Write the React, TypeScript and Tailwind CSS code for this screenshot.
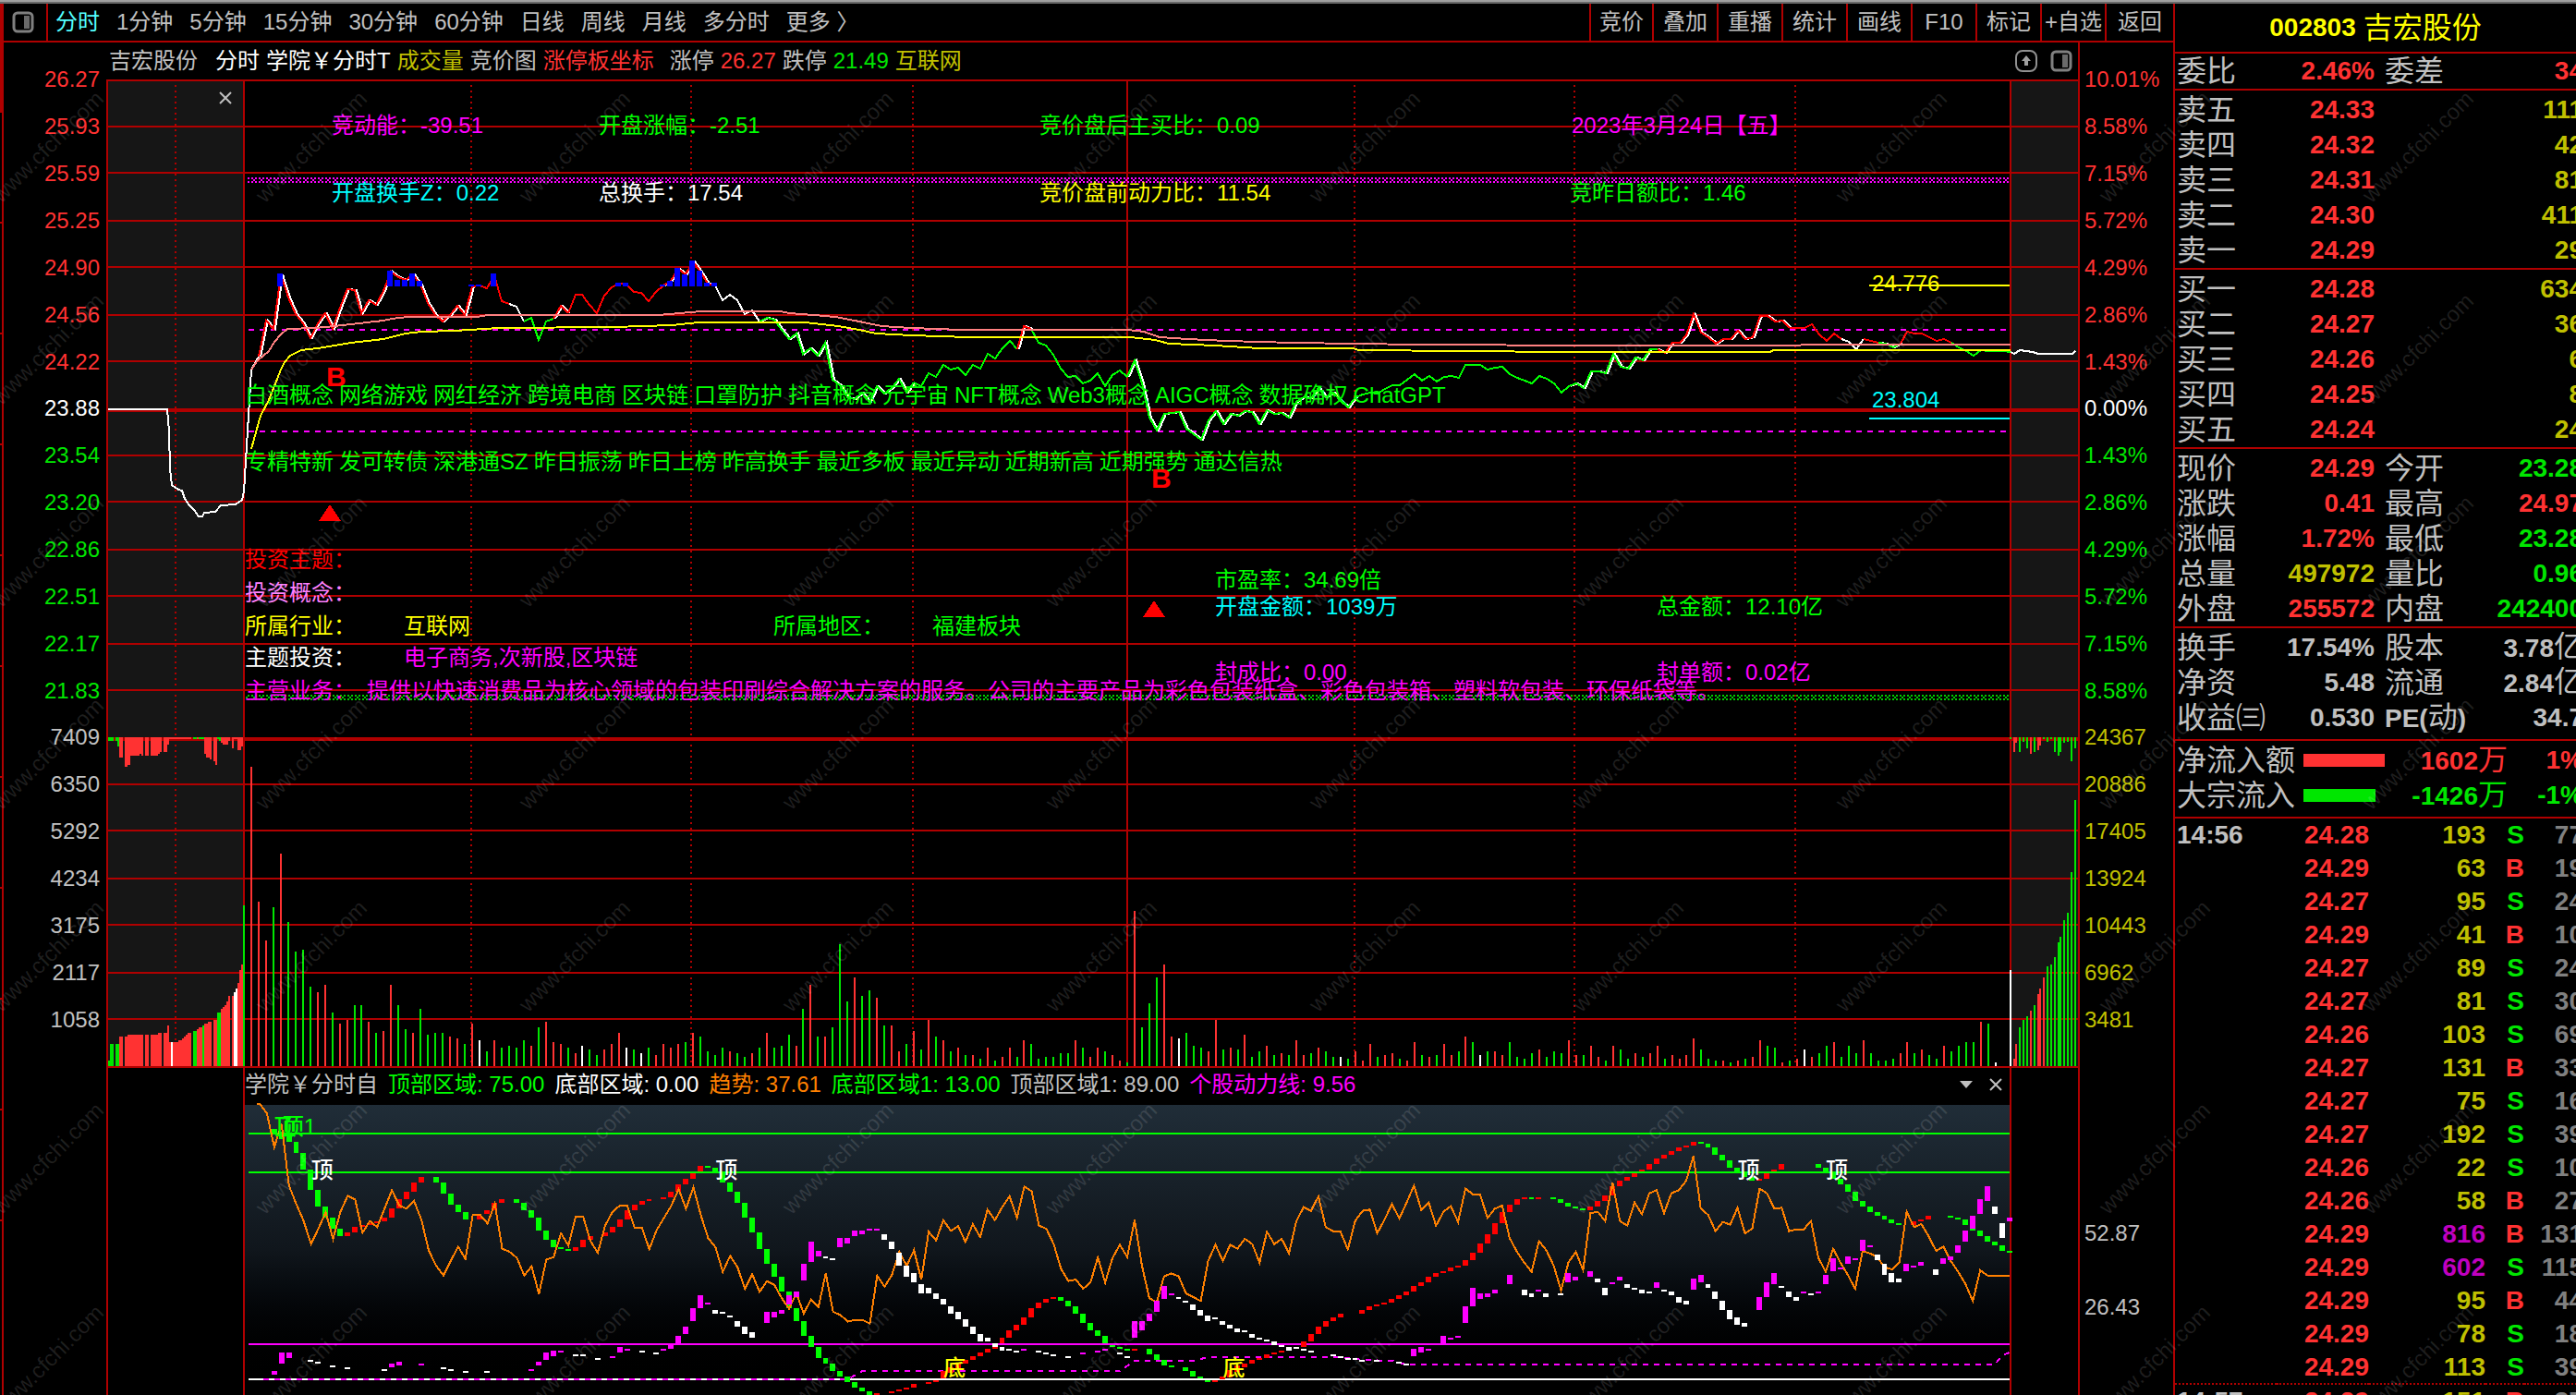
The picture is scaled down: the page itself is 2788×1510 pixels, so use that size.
import React from 'react';

const PERIODS = ['分时', '1分钟', '5分钟', '15分钟', '30分钟', '60分钟', '日线', '周线', '月线', '多分时', '更多 〉'];
const TOOLS = ['竞价', '叠加', '重播', '统计', '画线', 'F10', '标记', '+自选', '返回'];

const PRICE_AXIS = ['26.27', '25.93', '25.59', '25.25', '24.90', '24.56', '24.22', '23.88', '23.54', '23.20', '22.86', '22.51', '22.17', '21.83'];
const VOLUME_AXIS = ['7409', '6350', '5292', '4234', '3175', '2117', '1058'];
const PERCENT_AXIS = ['10.01%', '8.58%', '7.15%', '5.72%', '4.29%', '2.86%', '1.43%', '0.00%', '1.43%', '2.86%', '4.29%', '5.72%', '7.15%', '8.58%'];
const AMOUNT_AXIS = ['24367', '20886', '17405', '13924', '10443', '6962', '3481'];

const SELLS = [['卖五', '24.33', '111'], ['卖四', '24.32', '42'], ['卖三', '24.31', '81'], ['卖二', '24.30', '411'], ['卖一', '24.29', '29']];
const BUYS = [['买一', '24.28', '634'], ['买二', '24.27', '36'], ['买三', '24.26', '6'], ['买四', '24.25', '8'], ['买五', '24.24', '24']];

const RED = 'text-[#ff3232]';
const GREEN = 'text-[#00e600]';
const YELLOW = 'text-[#c0c000]';
const GRAY = 'text-[#c0c0c0]';

const QUOTE = [
  ['现价', '24.29', RED, '今开', '23.28', GREEN],
  ['涨跌', '0.41', RED, '最高', '24.97', RED],
  ['涨幅', '1.72%', RED, '最低', '23.28', GREEN],
  ['总量', '497972', YELLOW, '量比', '0.96', GREEN],
  ['外盘', '255572', RED, '内盘', '242400', GREEN],
];
const CAPITAL = [
  ['换手', '17.54%', GRAY, '股本', '3.78亿', GRAY],
  ['净资', '5.48', GRAY, '流通', '2.84亿', GRAY],
  ['收益㈢', '0.530', GRAY, 'PE(动)', '34.7', GRAY],
];

const TICKS = [
  ['14:56', '24.28', '193', 'S', '77'], ['', '24.29', '63', 'B', '19'], ['', '24.27', '95', 'S', '24'],
  ['', '24.29', '41', 'B', '10'], ['', '24.27', '89', 'S', '24'], ['', '24.27', '81', 'S', '30'],
  ['', '24.26', '103', 'S', '69'], ['', '24.27', '131', 'B', '33'], ['', '24.27', '75', 'S', '16'],
  ['', '24.27', '192', 'S', '39'], ['', '24.26', '22', 'S', '10'], ['', '24.26', '58', 'B', '27'],
  ['', '24.29', '816', 'B', '131'], ['', '24.29', '602', 'S', '115'], ['', '24.29', '95', 'B', '44'],
  ['', '24.29', '78', 'S', '18'], ['', '24.29', '113', 'S', '39'], ['14:57', '24.29', '151', 'B', '37'],
];

// y of the last price, one entry per minute
const PRICE = [
  532, 400, 386, 347, 356, 297, 322, 340, 350, 366, 350, 339, 356, 333, 313, 314, 339, 325, 330, 315, 294, 300, 303, 297, 308, 328, 341, 348, 341, 331,
  341, 310, 309, 312, 298, 326, 329, 332, 348, 344, 368, 348, 345, 331, 339, 319, 319, 330, 339, 320, 311, 307, 308, 316, 317, 326, 316, 309, 304, 291,
  297, 283, 294, 307, 309, 325, 319, 325, 340, 336, 348, 344, 346, 357, 367, 361, 383, 377, 385, 371, 411, 417, 430, 432, 425, 435, 418, 426, 420, 410,
  425, 414, 418, 404, 408, 395, 400, 398, 406, 395, 399, 383, 388, 377, 369, 378, 353, 356, 371, 374, 384, 399, 408, 407, 415, 412, 404, 418, 406, 401,
  408, 390, 415, 452, 466, 448, 447, 446, 464, 470, 476, 455, 445, 459, 448, 450, 445, 446, 459, 444, 448, 447, 452, 435, 430, 431, 420, 430, 425, 434,
  441, 430, 427, 425, 426, 421, 417, 417, 411, 405, 412, 407, 413, 408, 407, 409, 395, 395, 395, 400, 398, 397, 405, 409, 412, 415, 407, 410, 415, 425,
  418, 415, 420, 402, 402, 404, 383, 397, 399, 387, 390, 378, 378, 382, 371, 371, 363, 340, 360, 365, 372, 367, 367, 358, 367, 365, 342, 342, 348, 347,
  355, 355, 355, 351, 362, 369, 361, 367, 370, 378, 367, 369, 371, 372, 376, 372, 359, 361, 361, 365, 369, 367, 371, 376, 380, 385, 379, 380, 380, 380, 381,
];

// [from minute, to minute, colour, drawn with a white shadow line]
const PRICE_RUNS: [number, number, string, boolean][] = [
  [0, 2, '#ffffff', false], [2, 31, '#ff0000', true], [31, 36, '#ff0000', false], [36, 38, '#ffffff', false],
  [38, 42, '#00ff00', false], [42, 44, '#ff0000', true], [44, 57, '#ff0000', false], [57, 64, '#ff0000', true],
  [64, 70, '#ffffff', false], [70, 91, '#00ff00', true], [91, 105, '#00ff00', false], [105, 107, '#ff0000', true],
  [107, 120, '#00ff00', false], [120, 151, '#00ff00', true], [151, 180, '#00ff00', false], [180, 192, '#00ff00', true],
  [192, 210, '#ff0000', true], [210, 217, '#ff0000', false], [217, 220, '#ffffff', false], [220, 222, '#ff0000', false],
  [222, 225, '#00ff00', true], [225, 232, '#ff0000', false], [232, 240, '#00ff00', false],
];

const BLUE_BARS = [
  [5, 296], [20, 293], [21, 303], [22, 303], [23, 296], [24, 304], [31, 308], [32, 308], [34, 296], [51, 306], [52, 306],
  [57, 308], [58, 304], [59, 290], [60, 297], [61, 282], [62, 293], [63, 306], [64, 306],
];

const VOLUME = `g87 r162 r89 r68 g86 r115 g78 g62 g63 g43 r40 r44 g29 r23 r25 g33 g33 r24 g18 r19 r44 g33 g20 r18 g31 g17 g18 g18 r16 r15
g12 r23 w14 g8 r14 g10 g11 g10 g14 r11 g21 r24 r13 r12 g10 r7 w11 g9 g6 r9 r12 r18 w10 g9 w7 g10 r6 r12 r10 r12
g13 r18 g16 g8 g6 g10 r8 g7 g5 r7 g10 r18 g10 g11 g17 r11 g31 r44 g16 r16 g21 g66 g35 r48 g38 g41 r37 g22 r22 r8
g12 r19 g9 r25 g16 r14 g8 r10 g6 r6 g4 r10 g3 r5 r10 g5 r14 g12 g4 g5 g5 g7 g7 r14 g10 r5 r10 g8 r6 r3
g2 r84 g21 g34 g48 r55 r16 w15 g18 g11 g10 r8 r25 g9 r10 g9 r17 g5 g8 r11 g6 r7 g6 r14 r6 g7 r10 g8 g5 w5
g4 r8 r3 r12 g5 r6 r7 g4 r3 r13 g6 r5 g6 r12 r6 g8 r16 g13 w6 g8 r8 r6 g13 g5 g4 g7 r9 g5 g8 g7
r14 r6 g6 r11 r5 g3 r11 g9 g4 r7 g5 r7 r11 g4 r6 r4 r6 r15 g9 g4 g3 r3 g2 r3 g4 r5 r14 g11 g10 r2
g3 r4 w9 r5 g7 g11 r13 g5 g11 g7 r14 g7 g3 g3 g4 r7 r13 g7 r9 g6 g4 r11 g8 g11 g13 g13 r24 g23 w2 w0 w52`.split(/\s+/);

// opening call auction: colour, left, right, height
const AUCTION_MATCHED = `g117,119,6 g119,123,24 g125,129,24 r129,133,32 r135,138,32 r138,155,34 r157,161,34 r163,171,34 r171,175,36 r177,181,36
r181,183,44 r183,185,26 w185,187,26 r187,193,26 r193,197,28 r197,199,30 r199,201,32 r201,203,34 r203,207,36 g209,213,38 r213,215,40 r215,219,42
g219,221,44 r221,225,46 r225,229,48 r231,235,50 g235,239,58 r239,241,62 r241,243,64 r243,245,66 r245,247,70 r247,249,76 r251,253,76 w253,255,80
w255,257,84 r257,259,90 r259,261,104 r261,263,110`.split(/\s+/);
const AUCTION_UNMATCHED = `g117,123,4 g125,127,4 g127,129,10 r129,133,22 r135,138,32 r138,141,30 r141,151,20 r151,153,18 r153,155,20 r157,161,20
r163,171,20 r171,173,18 r173,175,16 r177,181,16 r181,183,8 r183,207,2 g209,213,2 r213,215,2 g215,221,2 r221,223,18 r223,227,22 r227,229,24
r231,233,26 r233,235,30 g235,237,2 g237,239,4 r239,241,6 r241,247,8 r247,249,4 r251,253,12 r253,257,2 r257,261,14 r261,263,10`.split(/\s+/);
const CLOSING_MATCHED = `r2179,2181,8 r2181,2183,24 g2185,2187,42 g2189,2191,50 g2193,2195,54 r2197,2199,60 g2201,2203,66 r2205,2207,78 r2207,2209,84
r2211,2213,96 g2215,2217,108 g2219,2221,110 g2223,2225,118 g2227,2229,134 g2229,2231,140 g2233,2235,158 g2237,2239,166 g2241,2243,210 g2245,2247,288`.split(/\s+/);
const CLOSING_UNMATCHED = `g2175,2177,2 r2179,2181,16 r2181,2183,6 g2185,2187,16 g2189,2191,5 g2193,2195,12 r2197,2199,18 g2201,2203,16 r2205,2207,14
r2207,2209,9 g2211,2213,2 g2215,2217,5 g2219,2221,2 g2223,2225,16 g2227,2229,20 g2229,2231,16 g2233,2235,6 g2237,2239,5 g2241,2243,26 g2245,2247,12`.split(/\s+/);

const GRID_Y = [87, 137, 187, 239, 289, 341, 391, 493, 543, 595, 645, 697, 747, 849, 899, 951, 1001, 1053, 1103, 1155];
const DOTTED_X = [190, 510, 748, 988, 1466, 1704, 1943];

const AVG_LINE = '272,400 279,390 291,380 297,370 304,362 311,356 341,355 362,353 380,351 397,349 415,347 424,345 442,343 516,343 528,341 712,341 759,337 845,337 854,339 881,341 904,343 930,348 954,353 986,355 1040,357 1220,357 1238,359 1255,365 1286,367 1327,369 1399,371 1535,373 1725,374 2176,373';
const SLOW_LINE = '272,486 282,450 291,433 304,400 308,392 314,385 326,379 344,377 380,371 415,367 439,361 457,359 492,358 540,355 664,354 727,352 756,349 872,349 907,353 930,357 948,361 986,363 1049,365 1224,365 1250,368 1265,372 1315,374 1363,377 1464,377 1471,379 1695,381 1916,381 1919,379 2176,379';
const PRE_OPEN = '116,443 181,443 183,467 184,507 186,525 193,530 197,531 200,540 205,547 210,552 215,559 219,559 221,555 233,554 239,547 255,546 262,541 264,532';
const AFTER_CLOSE = '2176,381 2180,383 2186,379 2200,381 2206,383 2243,383 2246,380';

const NOTES: [number, number, string, string][] = [
  [359, 136, 'text-[#ff00ff]', '竞动能：-39.51'],
  [648, 136, 'text-[#00ff00]', '开盘涨幅：-2.51'],
  [1125, 136, 'text-[#00ff00]', '竞价盘后主买比：0.09'],
  [1701, 136, 'text-[#ff00ff]', '2023年3月24日【五】'],
  [359, 209, 'text-[#00ffff]', '开盘换手Z：0.22'],
  [648, 209, 'text-white', '总换手：17.54'],
  [1125, 209, 'text-[#ffff00]', '竞价盘前动力比：11.54'],
  [1699, 209, 'text-[#00ff00]', '竞昨日额比：1.46'],
  [2026, 307, 'text-[#ffff00]', '24.776'],
  [2026, 433, 'text-[#00ffff]', '23.804'],
  [265, 428, 'text-[#00ff00]', '白酒概念 网络游戏 网红经济 跨境电商 区块链 口罩防护 抖音概念 元宇宙 NFT概念 Web3概念 AIGC概念 数据确权 ChatGPT'],
  [265, 500, 'text-[#00ff00]', '专精特新 发可转债 深港通SZ 昨日振荡 昨日上榜 昨高换手 最近多板 最近异动 近期新高 近期强势 通达信热'],
  [265, 606, 'text-[#ff0000]', '投资主题：'],
  [265, 642, 'text-[#ff80ff]', '投资概念：'],
  [265, 678, 'text-[#ffff00]', '所属行业：'],
  [437, 678, 'text-[#ffff00]', '互联网'],
  [837, 678, 'text-[#00ff00]', '所属地区：'],
  [1009, 678, 'text-[#00ff00]', '福建板块'],
  [265, 712, 'text-white', '主题投资：'],
  [437, 712, 'text-[#ff00ff]', '电子商务,次新股,区块链'],
  [265, 748, 'text-[#ff00ff]', '主营业务：'],
  [397, 748, 'text-[#ff00ff]', '提供以快速消费品为核心领域的包装印刷综合解决方案的服务。公司的主要产品为彩色包装纸盒、彩色包装箱、塑料软包装、环保纸袋等。'],
  [1315, 628, 'text-[#00ff00]', '市盈率：34.69倍'],
  [1315, 657, 'text-[#00ffff]', '开盘金额：1039万'],
  [1793, 657, 'text-[#00ff00]', '总金额：12.10亿'],
  [1315, 728, 'text-[#ff00ff]', '封成比：0.00'],
  [1793, 728, 'text-[#ff00ff]', '封单额：0.02亿'],
];

// indicator pane, y in thirds of a pixel
const TREND = [
  134, 165, 275, 200, 400, 460, 515, 590, 540, 487, 573, 485, 433, 445, 553, 515, 535, 475, 415, 465, 475, 450, 510, 610, 660, 692, 645, 598, 638, 495,
  495, 523, 458, 605, 615, 635, 692, 662, 752, 640, 632, 555, 595, 500, 500, 580, 618, 530, 485, 465, 465, 537, 537, 606, 545, 505, 465, 412, 475, 405,
  495, 570, 600, 680, 628, 665, 735, 688, 745, 710, 722, 765, 800, 750, 815, 770, 795, 685, 810, 820, 842, 836, 836, 848, 692, 728, 690, 615, 660, 610,
  705, 550, 578, 512, 547, 532, 583, 525, 567, 478, 512, 470, 435, 505, 403, 418, 530, 540, 590, 670, 710, 705, 735, 715, 633, 715, 635, 592, 632, 512,
  660, 765, 780, 695, 685, 695, 750, 762, 775, 645, 592, 645, 592, 605, 573, 590, 650, 550, 590, 573, 620, 515, 470, 482, 435, 535, 548, 550, 607, 515,
  482, 478, 555, 510, 460, 507, 455, 400, 480, 455, 530, 485, 467, 518, 410, 428, 430, 505, 475, 465, 570, 615, 650, 680, 580, 610, 660, 740, 650, 615,
  675, 490, 485, 515, 390, 515, 530, 455, 493, 425, 415, 490, 425, 415, 385, 305, 475, 495, 548, 518, 527, 472, 555, 540, 410, 425, 475, 472, 548, 542,
  542, 515, 635, 680, 605, 650, 690, 735, 612, 620, 632, 665, 672, 650, 485, 535, 525, 565, 612, 598, 645, 680, 720, 775, 675, 692, 692, 692, 692,
];

// colour + minute, top, bottom
const CYCLE = `g4,216,235 g5,225,248 g6,235,258 g7,258,294 g8,294,348 g9,348,414 g10,414,468 g11,468,504 g12,504,540 g13,540,564 r14,552,564 r15,534,552 r16,528,534 r17,522,528 r18,516,522 r19,504,516
r20,474,504 r21,444,474 r22,420,444 r23,390,420 r24,372,390 g26,372,390 g27,390,426 g28,426,462 g29,462,486 g30,486,510 r32,498,510 r33,480,492 r34,456,480 r35,444,456 g37,444,456 g38,456,480
g39,480,504 g40,504,546 g41,546,576 g42,576,600 g43,600,606 g44,606,612 r45,600,612 r46,576,600 r47,564,576 r49,552,564 r50,534,552 r51,510,534 r52,480,510 r53,462,480 r54,450,462 r55,444,450
r57,438,444 r58,420,438 r59,396,420 r60,378,396 r61,360,378 r62,336,354 g63,336,342 g64,342,354 g65,354,390 g66,390,420 g67,420,456 g68,456,504 g69,504,552 g70,552,606 g71,606,654 g72,654,696
g73,696,744 g74,744,798 g75,798,840 g76,840,888 g77,888,924 g78,924,960 g79,960,978 g80,978,1002 g81,1002,1020 g82,1020,1038 g83,1038,1056 g84,1056,1068 g85,1068,1080 r86,1074,1080 r88,1068,1074
r89,1062,1068 r90,1056,1062 r91,1044,1056 r93,1038,1044 r94,1032,1038 r95,1002,1026 r96,990,1008 r97,978,996 r98,966,978 r99,954,966 r100,942,954 r101,930,942 r102,918,930 r103,894,912 r104,870,894
r105,852,870 r106,828,852 r107,798,828 r108,780,798 r109,768,780 r110,762,768 g111,762,774 g112,774,792 g113,792,816 g114,816,846 g115,846,870 g116,870,888 g117,888,912 g118,918,924 g119,924,930
g120,930,936 r121,930,936 g123,930,948 g124,948,966 g125,966,984 g126,984,990 g128,990,1002 g129,1002,1020 g130,1020,1026 g131,1032,1038 r132,1032,1038 r133,1020,1028 r134,1000,1024 r135,985,1005
r136,978,990 r137,966,978 r138,960,966 r139,948,960 r140,942,948 r141,936,942 r144,906,924 r145,882,906 r146,858,882 r147,840,858 r148,828,840 r149,816,828 r152,804,816 r153,792,804 r154,786,792
r155,780,786 r156,768,780 r157,756,768 r158,744,756 r159,726,744 r160,714,726 r161,696,714 r162,684,696 r163,678,684 r164,666,678 r165,660,666 r166,642,660 r167,618,642 r168,588,618 r169,558,588
r170,522,558 r171,486,522 r172,462,486 r173,444,462 r174,438,444 g175,438,444 r176,438,444 g178,438,444 g179,444,456 g180,456,468 g181,468,474 g182,474,480 r183,468,480 r184,450,468 r185,432,450
r186,402,432 r187,384,402 r188,372,384 r189,360,372 r190,348,354 r191,330,348 r192,312,330 r193,300,312 r194,288,300 r195,276,288 r196,270,276 r197,258,270 g198,258,264 g199,264,276 g200,276,300
g201,300,318 g202,318,342 g203,342,354 g204,354,372 g205,372,384 r206,378,384 r207,360,378 r208,348,354 r209,330,348 g214,330,342 g215,342,354 g216,354,378 g217,378,396 g218,396,420 g219,420,450
g220,450,468 g221,468,486 g222,486,498 g223,498,510 g224,510,522 g225,522,528 r227,516,528 r228,510,516 r229,498,510 g232,498,504 g233,504,510 g234,510,528 g235,528,546 g236,546,564 g237,564,582
g238,582,594 g239,594,612 g240,612,618`.split(/\s+/);

const POWER = `m4,1002,1014 m5,942,978 m6,942,960 w9,966,972 w10,972,978 w12,984,990 w14,990,996 w19,996,1002 m20,978,990 m21,972,984 m24,978,984 w27,990,996 w28,996,1002 w30,1002,1008 w33,1002,1008
m39,996,1002 m40,972,984 m41,942,966 m42,936,954 m43,936,942 w45,948,954 w46,948,954 w48,960,966 m50,954,960 m51,924,942 m52,930,936 w54,936,942 w56,942,948 m57,930,936 m58,915,930 m59,888,912
m60,858,882 m61,798,840 m62,756,798 m63,780,786 w64,804,816 w65,810,816 w66,822,828 w67,840,858 w68,858,882 w69,876,894 m71,810,846 m72,810,828 m73,804,816 m74,756,786 m75,744,762 m76,654,708
m77,582,648 m78,612,630 w79,630,636 w80,636,642 m81,570,600 m82,570,588 m83,546,564 m84,546,558 m85,540,546 m86,540,546 w87,558,576 w88,582,606 w89,618,660 w90,660,696 w91,684,714 w92,720,750
w93,732,750 w94,750,768 w95,768,786 w96,792,816 w97,810,834 w98,834,858 w99,858,882 w100,882,906 w101,894,906 w102,912,924 w103,924,936 w104,930,936 w105,936,942 m106,930,936 w108,936,942
w109,942,948 w110,948,954 w112,954,960 m114,942,948 m116,936,942 m117,930,936 w119,942,948 w120,954,960 m121,840,894 m122,840,870 m123,816,840 m124,774,810 m125,726,768 m126,750,756 w127,762,768
w128,774,780 w129,786,804 w130,804,822 w131,822,840 w132,828,834 w133,840,852 w134,852,864 w135,864,876 w136,870,876 w137,882,894 w138,894,900 w139,900,906 w140,906,918 w141,918,924 w142,924,936
w143,924,930 w144,930,936 w145,936,942 w148,948,954 w149,954,960 w150,960,966 w151,960,966 w152,966,972 w154,966,972 w157,972,978 w158,978,984 m159,930,954 m160,924,942 m161,930,936 m163,888,912
m164,894,900 m165,888,894 m166,792,846 m167,732,792 m168,750,768 m169,750,762 m170,738,750 m172,690,720 w174,738,756 w175,750,762 m176,738,744 w177,750,762 w179,750,756 m180,684,714 m181,696,708
m183,678,696 w184,702,714 w185,732,756 m186,714,720 m187,696,708 w188,720,732 w189,732,738 w190,738,750 w191,744,750 m192,714,732 w193,738,744 w194,744,756 w195,762,780 w196,774,786 m197,702,738
m198,690,714 w199,720,732 w200,744,768 w201,774,804 w202,804,834 w203,828,852 w204,846,858 m206,762,804 m207,714,762 m208,684,720 w209,726,732 w210,744,762 w211,762,774 m212,744,750 w213,750,756
m214,744,750 m215,690,720 m216,636,678 m217,666,672 m218,630,654 m219,636,642 m220,576,612 m221,594,600 w222,624,642 w223,654,690 w224,684,714 w225,702,714 m226,654,678 m227,660,666 m228,648,660
w230,672,690 m231,636,654 m232,630,642 m233,594,618 m234,546,582 m235,498,540 m236,444,492 m237,402,450 w238,468,492 w239,522,570 m240,504,516`.split(/\s+/);

// minute, top, colour, text
const SIGNALS: [number, number, string, string][] = [
  [4, 12, 'text-[#00ff00]', '顶'], [5, 12, 'text-[#00ff00]', '顶1'],
  [9, 59, 'text-white', '顶'], [64, 59, 'text-white', '顶'], [203, 59, 'text-white', '顶'], [215, 59, 'text-white', '顶'],
  [95, 273, 'text-[#ffff00]', '底'], [133, 273, 'text-[#ffff00]', '底'],
];

const BAR_FILL: Record<string, string> = { r: '#ff3232', g: '#00e600', w: '#ffffff' };
const BLOCK_FILL: Record<string, string> = { r: '#ff0000', g: '#00ff00', w: '#ffffff', m: '#ff00ff' };

const PLOT_LEFT = 117;
const PLOT_WIDTH = 2132;
const minuteX = (minute: number) => 264 + (minute * 1912) / 240;
const runPoints = (from: number, to: number, shift: number) =>
  PRICE.slice(from, to + 1).map((y, i) => `${Math.round(minuteX(from + i)) + shift},${y}`).join(' ');

const SpanBars: React.FC<{ bars: string[]; down?: boolean }> = ({ bars, down }) => (
  <>
    {bars.map((bar) => {
      const [left, right, height] = bar.slice(1).split(',').map(Number);
      return <rect key={bar} x={left} y={down ? 798 : 1154 - height} width={right - left} height={height} fill={BAR_FILL[bar[0]]} />;
    })}
  </>
);

const PanelIcon: React.FC = () => (
  <svg width="24" height="24" viewBox="0 0 24 24" fill="none" stroke="#808080" strokeWidth="3" aria-hidden="true">
    <rect x="2" y="2" width="20" height="20" rx="4" />
    <path d="M16 5v14" stroke="#6a6a6a" strokeWidth="6" />
  </svg>
);

const CloseIcon: React.FC = () => (
  <svg width="14" height="14" viewBox="0 0 14 14" stroke="#c0c0c0" strokeWidth="2" aria-hidden="true">
    <path d="M1 1l12 12M13 1L1 13" />
  </svg>
);

const Toolbar: React.FC = () => (
  <nav className="flex h-[42px] items-stretch border-b-2 border-[#b00000] text-[#c0c0c0]">
    <button aria-label="侧栏" className="flex w-[48px] items-center justify-center border-r-2 border-[#b00000] pr-1">
      <PanelIcon />
    </button>
    <div className="flex flex-1 items-center gap-[18px] pl-2">
      {PERIODS.map((period, i) => (
        <button key={period} className={i === 0 ? 'whitespace-nowrap text-[#54ffff]' : 'whitespace-nowrap'}>{period}</button>
      ))}
    </div>
    <div className="flex">
      {TOOLS.map((tool) => (
        <button key={tool} className="w-[70px] whitespace-nowrap border-l-2 border-[#b00000] text-center first:w-[68px] last:w-[74px]">{tool}</button>
      ))}
    </div>
  </nav>
);

const TitleRow: React.FC = () => (
  <div className="flex h-10 items-center gap-[7px] whitespace-nowrap px-[3px] text-[#c0c0c0]">
    <span className="pr-3">吉宏股份</span>
    <span className="text-white">分时</span>
    <span className="text-white">学院￥分时T</span>
    <span className="text-[#c0c000]">成交量</span>
    <span>竞价图</span>
    <span className="pr-[10px] text-[#ff3232]">涨停板坐标</span>
    <span>涨停</span>
    <span className="text-[#ff3232]">26.27</span>
    <span>跌停</span>
    <span className="text-[#00e600]">21.49</span>
    <span className="text-[#c0c000]">互联网</span>
    <div className="ml-auto flex gap-[14px] pr-[3px]">
      <button aria-label="上移">
        <svg width="24" height="24" viewBox="0 0 24 24" fill="none" stroke="#909090" strokeWidth="2" aria-hidden="true">
          <rect x="1" y="1" width="22" height="22" rx="7" />
          <path d="M12 6l5 6h-3v5h-4v-5H7z" fill="#a0a0a0" stroke="none" />
        </svg>
      </button>
      <button aria-label="侧栏"><PanelIcon /></button>
    </div>
  </div>
);

const MainChart: React.FC = () => (
  <div className="relative">
    <svg className="block h-[1070px] w-full" viewBox="117 86 2132 1070" preserveAspectRatio="none" shapeRendering="crispEdges" fill="none">
      <defs>
        <pattern id="cross-magenta" width="8" height="6" patternUnits="userSpaceOnUse" y="192">
          <path d="M0 1h2M4 1h2M2 3h2M0 5h2M4 5h2" stroke="#ff00ff" strokeWidth="2" />
        </pattern>
        <pattern id="cross-green" width="8" height="6" patternUnits="userSpaceOnUse" y="752">
          <path d="M0 1h2M4 1h2M2 3h2M0 5h2M4 5h2" stroke="#00c800" strokeWidth="2" />
        </pattern>
      </defs>
      <rect x="115" y="86" width="149" height="1070" fill="#161616" />
      <rect x="2176" y="86" width="74" height="1070" fill="#161616" />

      <g stroke="#b00000" strokeWidth="2">
        {GRID_Y.map((y) => <path key={y} d={`M115 ${y}H2250`} />)}
        <path d="M115 444H2250M115 800H2250" strokeWidth="4" />
        {DOTTED_X.map((x) => <path key={x} d={`M${x} 92V1154`} strokeDasharray="2 4" />)}
        <path d="M264 86V1156M1220 86V1156M2176 86V1156" />
      </g>

      <rect x="268" y="192" width="1908" height="6" fill="url(#cross-magenta)" />
      <rect x="266" y="752" width="1910" height="6" fill="url(#cross-green)" />
      <path d="M269 357H2172M269 467H2172" stroke="#ff00ff" strokeWidth="2" strokeDasharray="6 6" />

      {VOLUME.map((bar, i) => (
        <rect key={i} x={Math.round(minuteX(i)) - 1} y={1154 - Number(bar.slice(1)) * 2} width="2" height={Number(bar.slice(1)) * 2} fill={BAR_FILL[bar[0]]} />
      ))}
      <SpanBars bars={AUCTION_MATCHED} />
      <SpanBars bars={AUCTION_UNMATCHED} down />
      <SpanBars bars={CLOSING_MATCHED} />
      <SpanBars bars={CLOSING_UNMATCHED} down />

      <g strokeWidth="2">
        <polyline points={PRE_OPEN} stroke="#ffffff" />
        <polyline points={AFTER_CLOSE} stroke="#ffffff" />
        {PRICE_RUNS.map(([from, to, color, shadow]) => (
          <g key={from}>
            {shadow && <polyline points={runPoints(from, to, 2)} stroke="#ffffff" />}
            <polyline points={runPoints(from, to, 0)} stroke={color} />
          </g>
        ))}
        <polyline points={AVG_LINE} stroke="#ff8080" />
        <polyline points={SLOW_LINE} stroke="#ffff00" />
      </g>
      {BLUE_BARS.map(([minute, top]) => (
        <rect key={minute} x={Math.round(minuteX(minute)) - 4} y={top} width="6" height={310 - top} fill="#0000ff" />
      ))}
      <path d="M2023 309H2175" stroke="#ffff00" strokeWidth="2" />
      <path d="M2023 453H2175" stroke="#00ffff" strokeWidth="2" />
      <path d="M357 546l12 18h-24zM1249 650l12 18h-24z" fill="#ff0000" />
    </svg>

    {NOTES.map(([x, y, color, text]) => (
      <div
        key={text}
        className={`absolute flex -translate-y-1/2 gap-[6px] whitespace-nowrap leading-6 ${color}`}
        style={{ left: `${((x - PLOT_LEFT) / PLOT_WIDTH) * 100}%`, top: y - 86 }}
      >
        {text.split(' ').map((word) => <span key={word}>{word}</span>)}
      </div>
    ))}
    {[[353, 408], [1246, 518]].map(([x, y]) => (
      <span
        key={x}
        className="absolute -translate-y-1/2 text-[30px] font-bold leading-8 text-[#ff0000]"
        style={{ left: `${((x - PLOT_LEFT) / PLOT_WIDTH) * 100}%`, top: y - 86 }}
      >
        B
      </span>
    ))}
    <button aria-label="关闭竞价" className="absolute left-[120px] top-[13px]"><CloseIcon /></button>
  </div>
);

const Blocks: React.FC<{ blocks: string[] }> = ({ blocks }) => (
  <>
    {blocks.map((block) => {
      const [minute, top, bottom] = block.slice(1).split(',').map(Number);
      return <rect key={block} x={minute - 0.4} y={top} width="0.75" height={bottom - top} fill={BLOCK_FILL[block[0]]} />;
    })}
  </>
);

const Indicator: React.FC = () => (
  <div className="flex min-h-0 flex-1 flex-col border-x-2 border-[#b00000]">
    <div className="flex h-10 shrink-0 items-center gap-[11px] whitespace-nowrap pb-1 pr-2 text-[#c0c0c0]">
      <span>学院￥分时自</span>
      <span className="text-[#00ff00]">顶部区域: 75.00</span>
      <span className="text-white">底部区域: 0.00</span>
      <span className="text-[#ff8000]">趋势: 37.61</span>
      <span className="text-[#00ff00]">底部区域1: 13.00</span>
      <span>顶部区域1: 89.00</span>
      <span className="text-[#ff00ff]">个股动力线: 9.56</span>
      <div className="ml-auto flex items-center gap-[18px]">
        <button aria-label="选择指标">
          <svg width="14" height="8" viewBox="0 0 14 8" fill="#c0c0c0" aria-hidden="true"><path d="M0 0h14L7 8z" /></svg>
        </button>
        <button aria-label="关闭指标"><CloseIcon /></button>
      </div>
    </div>
    <div className="relative min-h-0 flex-1 bg-linear-to-b from-[#202d38] via-[#10161c] via-50% to-black">
      <svg className="block h-full w-full overflow-visible" viewBox="0 138 240 942" preserveAspectRatio="none" shapeRendering="crispEdges" fill="none">
        <g strokeWidth="2">
          <path d="M.5 230H240M.5 356H240" stroke="#00ff00" vectorEffect="non-scaling-stroke" />
          <path d="M.5 915H240" stroke="#ff00ff" vectorEffect="non-scaling-stroke" />
          <path d="M.5 1029H240" stroke="#ffffff" vectorEffect="non-scaling-stroke" />
          <polyline
            points="2.5,1029 82,1029 84,1002 119,1002 121,969 129,969 131,957 149,957 152,966 156,969 158,981 238,981 239,951 240,942"
            stroke="#ff00ff" strokeDasharray="6 6" vectorEffect="non-scaling-stroke"
          />
        </g>
        <Blocks blocks={CYCLE} />
        <polyline points={`1.6,134 ${TREND.map((y, i) => `${i + 2},${y}`).join(' ')}`} stroke="#ff8000" strokeWidth="2" vectorEffect="non-scaling-stroke" />
        <Blocks blocks={POWER} />
      </svg>
      {SIGNALS.map(([minute, top, color, text]) => (
        <span key={minute} className={`absolute whitespace-nowrap font-medium leading-6 ${color}`} style={{ left: `${(minute / 240) * 100}%`, top }}>
          {text}
        </span>
      ))}
    </div>
  </div>
);

const axisColor = (i: number) => {
  if (i < 7) return 'text-[#ff3232]';
  return i === 7 ? 'text-white' : 'text-[#00e600]';
};

const Axis: React.FC<{ top: string[]; bottom: string[]; bottomColor: string }> = ({ top, bottom, bottomColor }) => (
  <div className="grid h-[1068px] shrink-0 auto-rows-fr items-center">
    {top.map((label, i) => <div key={i} className={axisColor(i)}>{label}</div>)}
    {bottom.map((label) => <div key={label} className={bottomColor}>{label}</div>)}
  </div>
);

const DepthTable: React.FC<{ rows: string[][] }> = ({ rows }) => (
  <div className="border-b-2 border-[#b00000] pt-[2px]">
    <table className="w-[calc(100%+8px)] table-fixed">
      <tbody>
        {rows.map(([label, price, volume]) => (
          <tr key={label} className="h-[38px]">
            <th className="w-[110px] whitespace-nowrap pl-[2px] text-left text-[32px] font-normal leading-8">{label}</th>
            <td className="w-[106px] text-right text-[#ff3232]">{price}</td>
            <td className="text-right text-[#c0c000]">{volume}</td>
          </tr>
        ))}
      </tbody>
    </table>
  </div>
);

const QuoteTable: React.FC<{ rows: string[][] }> = ({ rows }) => (
  <table className="w-[calc(100%+8px)] table-fixed">
    <tbody>
      {rows.map(([a, aValue, aColor, b, bValue, bColor]) => (
        <tr key={a} className="h-[38px]">
          <th className="w-[110px] whitespace-nowrap pl-[2px] text-left text-[32px] font-normal leading-8">{a}</th>
          <td className={`w-[106px] text-right ${aColor}`}>{aValue}</td>
          <th className="w-[110px] whitespace-nowrap pl-[11px] text-left text-[32px] font-normal leading-8">
            {b.startsWith('PE') ? <><b className="text-[28px]">PE(</b>动<b className="text-[28px]">)</b></> : b}
          </th>
          <td className={`whitespace-nowrap text-right ${bColor}`}>
            {bValue.replace('亿', '')}
            {bValue.endsWith('亿') && <span className="text-[32px] font-normal leading-8">亿</span>}
          </td>
        </tr>
      ))}
    </tbody>
  </table>
);

const FlowRow: React.FC<{ label: string; bar: string; value: string; percent: string; color: string }> = ({ label, bar, value, percent, color }) => (
  <div className={`flex h-[38px] w-[calc(100%+8px)] items-center whitespace-nowrap ${color}`}>
    <div className="w-[139px] pl-[2px] text-[32px] font-normal leading-8 text-[#c0c0c0]">{label}</div>
    <div className="w-[100px]"><div className={`h-[14px] ${bar}`} /></div>
    <div className="w-[121px] text-right">{value}<span className="text-[32px] font-normal leading-8">万</span></div>
    <div className="flex-1 text-right">{percent}</div>
  </div>
);

const QuotePanel: React.FC = () => (
  <aside className="w-[436px] shrink-0 overflow-hidden border-l-2 border-[#b00000] text-[28px] font-bold leading-8 text-[#c0c0c0]">
    <h1 className="flex h-[54px] items-center justify-center gap-2 border-b-2 border-[#b00000] text-[#ffff00]">
      <span>002803</span>
      <span className="text-[32px] font-normal">吉宏股份</span>
    </h1>
    <div className="border-b-2 border-[#b00000]">
      <QuoteTable rows={[['委比', '2.46%', RED, '委差', '34', RED]]} />
    </div>
    <DepthTable rows={SELLS} />
    <DepthTable rows={BUYS} />
    <div className="border-b-2 border-[#b00000] pt-[2px]"><QuoteTable rows={QUOTE} /></div>
    <div className="border-b-2 border-[#b00000] pb-1 pt-[2px]"><QuoteTable rows={CAPITAL} /></div>
    <div className="border-b-2 border-[#b00000] pb-1 pt-[2px]">
      <FlowRow label="净流入额" bar="w-[88px] bg-[#ff3232]" value="1602" percent="1%" color="text-[#ff3232]" />
      <FlowRow label="大宗流入" bar="w-[78px] bg-[#00e600]" value="-1426" percent="-1%" color="text-[#00e600]" />
    </div>
    <table className="w-[calc(100%+8px)] table-fixed">
      <tbody>
        {TICKS.map(([time, price, volume, side, count], i) => (
          <tr key={i} className={time === '14:57' ? 'h-[36px] border-t-2 border-dotted border-[#b00000]' : 'h-[36px]'}>
            <td className="w-[110px] pl-[2px]">{time}</td>
            <td className="w-[100px] text-right text-[#ff3232]">{price}</td>
            <td className={Number(volume) > 500 ? 'w-[126px] text-right text-[#c000c0]' : 'w-[126px] text-right text-[#c0c000]'}>{volume}</td>
            <td className={side === 'S' ? 'w-[42px] text-right text-[#00e600]' : 'w-[42px] text-right text-[#ff3232]'}>{side}</td>
            <td className="text-right text-[#808080]">{count}</td>
          </tr>
        ))}
      </tbody>
    </table>
  </aside>
);

const Watermark: React.FC = () => (
  <div aria-hidden="true" className="pointer-events-none absolute -left-[91px] top-[49px] grid auto-rows-[219px] grid-cols-[repeat(10,285px)]">
    {Array.from({ length: 70 }, (_, i) => (
      <span key={i} className="flex -rotate-45 items-center justify-center whitespace-nowrap text-white/12">www.cfchi.com</span>
    ))}
  </div>
);

const App: React.FC = () => {
  return (
    <div className="relative flex h-screen flex-col overflow-hidden bg-black font-['Liberation_Sans','Noto_Sans_CJK_SC',sans-serif] text-[24px] leading-6">
      <div className="h-1 shrink-0 border-b-2 border-[#696969] bg-[#a0a0a0]" />
      <div className="flex min-h-0 flex-1">
        <div className="flex w-1 shrink-0 flex-col border-r-2 border-[#b00000]">
          <div className="h-[118px] bg-[#b00000]" />
          {[0, 1, 2, 3, 4, 5, 6, 7, 8, 9].map((i) => <div key={i} className="h-[120px] border-b-2 border-[#b00000]" />)}
        </div>
        <main className="flex min-w-0 flex-1 flex-col">
          <Toolbar />
          <div className="flex min-h-0 flex-1">
            <div className="w-[111px] shrink-0 pr-[7px] pt-[15px] text-right">
              <Axis top={PRICE_AXIS} bottom={VOLUME_AXIS} bottomColor="text-[#c0c0c0]" />
            </div>
            <div className="flex min-w-0 flex-1 flex-col">
              <TitleRow />
              <div className="flex min-h-0 flex-1 flex-col border-l-2 border-[#b00000]">
                <MainChart />
                <div className="flex min-h-0 flex-1">
                  <div className="w-[146px] shrink-0" />
                  <Indicator />
                  <div className="w-[72px] shrink-0" />
                </div>
              </div>
            </div>
            <div className="w-[103px] shrink-0 border-l-2 border-[#b00000] pl-[5px] pt-[15px] text-[#c0c0c0]">
              <Axis top={PERCENT_AXIS} bottom={AMOUNT_AXIS} bottomColor="text-[#c0c000]" />
              <div className="pt-[194px]">52.87</div>
              <div className="pt-14">26.43</div>
            </div>
          </div>
        </main>
        <QuotePanel />
      </div>
      <Watermark />
    </div>
  );
};

export default App;
